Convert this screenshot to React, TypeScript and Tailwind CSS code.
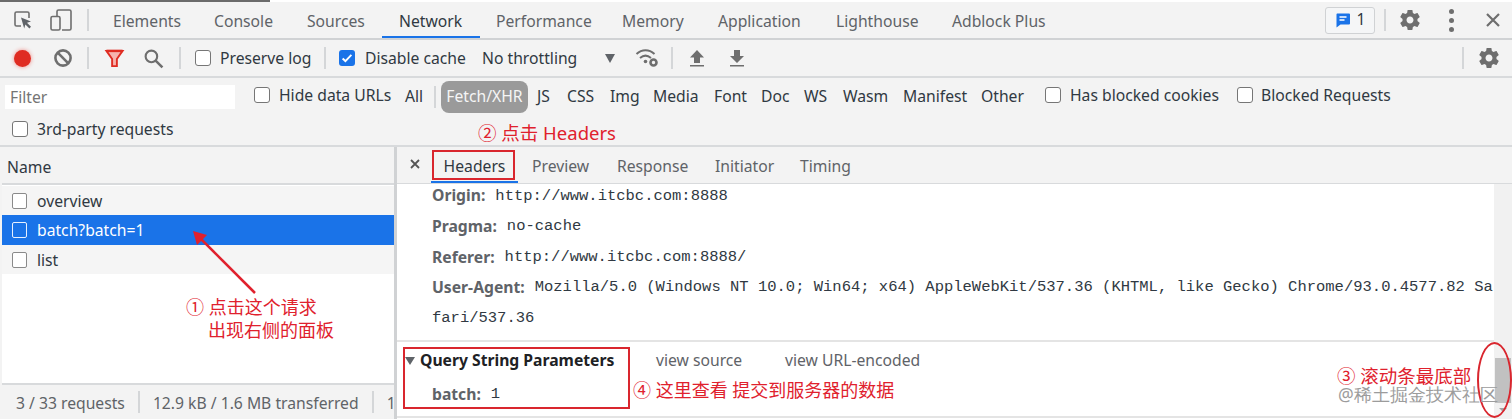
import React from 'react';

const gearPath =
  'M19.43 12.98c.04-.32.07-.64.07-.98s-.03-.66-.07-.98l2.11-1.65c.19-.15.24-.42.12-.64l-2-3.46c-.12-.22-.39-.3-.61-.22l-2.49 1c-.52-.4-1.08-.73-1.69-.98l-.38-2.65C14.46 2.18 14.25 2 14 2h-4c-.25 0-.46.18-.49.42l-.38 2.65c-.61.25-1.17.59-1.69.98l-2.49-1c-.23-.09-.49 0-.61.22l-2 3.46c-.13.22-.07.49.12.64l2.11 1.65c-.04.32-.07.65-.07.98s.03.66.07.98l-2.11 1.65c-.19.15-.24.42-.12.64l2 3.46c.12.22.39.3.61.22l2.49-1c.52.4 1.08.73 1.69.98l.38 2.65c.03.24.24.42.49.42h4c.25 0 .46-.18.49-.42l.38-2.65c.61-.25 1.17-.59 1.69-.98l2.49 1c.23.09.49 0 .61-.22l2-3.46c.12-.22.07-.49-.12-.64l-2.11-1.65zM12 15.5c-1.93 0-3.5-1.57-3.5-3.5s1.57-3.5 3.5-3.5 3.5 1.57 3.5 3.5-1.57 3.5-3.5 3.5z';

function Gear({ className }: { className: string }) {
  return (
    <svg viewBox="0 0 24 24" className={className} fill="#6e6e6e">
      <path d={gearPath} />
    </svg>
  );
}

function Sep({ className }: { className: string }) {
  return <div className={`w-[2px] h-[22px] bg-[#d4d6d8] shrink-0 ${className}`} />;
}

function Check({ className = '', on = false }: { className?: string; on?: boolean }) {
  if (on) {
    return (
      <span className={`w-[16px] h-[16px] rounded-[3px] bg-[#1a73e8] flex items-center justify-center shrink-0 ${className}`}>
        <svg viewBox="0 0 16 16" className="w-[14px] h-[14px]" fill="none" stroke="#fff" strokeWidth="2.2">
          <path d="M3 8.5l3.2 3L13 4.5" />
        </svg>
      </span>
    );
  }
  return <span className={`w-[16px] h-[16px] rounded-[3px] border-[1.5px] border-[#767676] bg-white shrink-0 ${className}`} />;
}

const tabs = [
  { label: 'Elements', cls: 'w-[68px] ml-[24px]' },
  { label: 'Console', cls: 'w-[63px] ml-[33px]' },
  { label: 'Sources', cls: 'w-[62px] ml-[30px]' },
  { label: 'Network', cls: 'w-[63px] ml-[30px]', active: true },
  { label: 'Performance', cls: 'w-[93px] ml-[34px]' },
  { label: 'Memory', cls: 'w-[62px] ml-[33px]' },
  { label: 'Application', cls: 'w-[84px] ml-[34px]' },
  { label: 'Lighthouse', cls: 'w-[82px] ml-[34px]' },
  { label: 'Adblock Plus', cls: 'w-[95px] ml-[34px]' },
];

const filters = [
  { label: 'JS', cls: 'w-[16px] ml-[9px]' },
  { label: 'CSS', cls: 'w-[28px] ml-[14px]' },
  { label: 'Img', cls: 'w-[28px] ml-[15px]' },
  { label: 'Media', cls: 'w-[46px] ml-[15px]' },
  { label: 'Font', cls: 'w-[32px] ml-[15px]' },
  { label: 'Doc', cls: 'w-[29px] ml-[15px]' },
  { label: 'WS', cls: 'w-[24px] ml-[14px]' },
  { label: 'Wasm', cls: 'w-[45px] ml-[15px]' },
  { label: 'Manifest', cls: 'w-[64px] ml-[15px]' },
  { label: 'Other', cls: 'w-[42px] ml-[14px]' },
];

const requests = [
  { name: 'overview', row: 'h-[29px] bg-[#f5f5f5] text-[#303942]', box: 'border-[#8a8a8a] bg-white' },
  { name: 'batch?batch=1', row: 'h-[30px] bg-[#1a73e8] text-white', box: 'border-[#e8f0fe] bg-[#1a73e8]' },
  { name: 'list', row: 'h-[29px] bg-[#f5f5f5] text-[#303942]', box: 'border-[#8a8a8a] bg-white' },
];

const headerRows = [
  { key: 'Origin:', value: 'http://www.itcbc.com:8888' },
  { key: 'Pragma:', value: 'no-cache' },
  { key: 'Referer:', value: 'http://www.itcbc.com:8888/' },
  {
    key: 'User-Agent:',
    value: 'Mozilla/5.0 (Windows NT 10.0; Win64; x64) AppleWebKit/537.36 (KHTML, like Gecko) Chrome/93.0.4577.82 Sa',
  },
];

const mono = "font-['Liberation_Mono',monospace] text-[15.5px] text-[#303942]";
const red = "text-[#e0212d] font-['Noto_Sans','Noto_Sans_CJK_SC',sans-serif]";

export default function App(): React.ReactNode {
  return (
    <div className="relative w-[1512px] h-[419px] overflow-hidden bg-[#f3f3f3] font-['Noto_Sans',sans-serif] text-[15.7px] text-[#303942] leading-none">
      <div className="flex h-[2px]">
        <div className="w-[270px] bg-[#6b6b6b]" />
        <div className="flex-1 bg-white" />
      </div>

      {/* main tab bar */}
      <div className="h-[38px] border-b-2 border-[#d0d2d4] flex items-center text-[#5f6368]">
        <svg viewBox="0 0 20 20" className="w-[20px] h-[20px] ml-[13px] shrink-0" fill="none">
          <path d="M8 16H3.5A1.5 1.5 0 0 1 2 14.5v-11A1.5 1.5 0 0 1 3.5 2h11A1.5 1.5 0 0 1 16 3.5V8" stroke="#6e6e6e" strokeWidth="1.6" />
          <path d="M8 7.5l10 4-4 1.3 4 4-1.6 1.6-4-4-1.2 4z" fill="#5f6368" />
        </svg>
        <svg viewBox="0 0 24 24" className="w-[24px] h-[24px] ml-[16px] shrink-0" fill="none" stroke="#6e6e6e" strokeWidth="1.6">
          <path d="M8 8V3.5A1.5 1.5 0 0 1 9.5 2h11A1.5 1.5 0 0 1 22 3.5v17a1.5 1.5 0 0 1-1.5 1.5H13" />
          <rect x="2" y="8.5" width="9" height="13.5" rx="1.5" />
        </svg>
        <Sep className="ml-[14px]" />
        {tabs.map(t => (
          <div
            key={t.label}
            className={`relative h-full flex items-center pt-[3px] whitespace-nowrap shrink-0 ${t.cls} ${t.active ? 'text-[#303942]' : ''}`}
          >
            {t.label}
            {t.active && <div className="absolute -left-[17px] -right-[18px] bottom-0 h-[2px] bg-[#1a73e8]" />}
          </div>
        ))}
        <div className="ml-auto w-[50px] h-[27px] rounded-[3px] border border-[#d0d2d4] bg-[#f5f6f7] flex items-center justify-center gap-[6px] text-[#303942]">
          <svg viewBox="0 0 16 16" className="w-[16px] h-[16px]">
            <path d="M2 1.5h12a1 1 0 0 1 1 1v9a1 1 0 0 1-1 1H5.5L1.5 15.5V2.5a1 1 0 0 1 .5-1z" fill="#1a73e8" />
            <path d="M4.5 5h7M4.5 8h5" stroke="#fff" strokeWidth="1.3" />
          </svg>
          1
        </div>
        <Sep className="ml-[9px]" />
        <Gear className="w-[24px] h-[24px] ml-[12px] shrink-0" />
        <div className="ml-[27px] flex flex-col gap-[4px] shrink-0">
          <span className="w-[5px] h-[5px] rounded-full bg-[#6e6e6e]" />
          <span className="w-[5px] h-[5px] rounded-full bg-[#6e6e6e]" />
          <span className="w-[5px] h-[5px] rounded-full bg-[#6e6e6e]" />
        </div>
        <svg viewBox="0 0 16 16" className="w-[16px] h-[16px] ml-[31px] mr-[11px] shrink-0" stroke="#6e6e6e" strokeWidth="2.2">
          <path d="M2 2l12 12M14 2L2 14" />
        </svg>
      </div>

      {/* network toolbar */}
      <div className="h-[38px] border-b-2 border-[#d8dadc] flex items-center whitespace-nowrap">
        <span className="w-[17px] h-[17px] rounded-full bg-[#df2c22] ml-[14px] shrink-0 shadow-[0_0_4px_#ef8a85]" />
        <svg viewBox="0 0 20 20" className="w-[20px] h-[20px] ml-[22px] shrink-0" fill="none" stroke="#6e6e6e" strokeWidth="2.6">
          <circle cx="10" cy="10" r="7.6" />
          <path d="M4.7 4.7l10.6 10.6" />
        </svg>
        <Sep className="ml-[14px]" />
        <svg viewBox="0 0 20 20" className="w-[21px] h-[19px] ml-[15px] shrink-0" fill="none" stroke="#df2c22" strokeWidth="2">
          <path d="M1.5 2h17l-6 8.5V18h-5v-7.5z" fill="#f6b3ae" />
          <path d="M1.5 2h17" strokeWidth="2.6" />
        </svg>
        <svg viewBox="0 0 20 20" className="w-[21px] h-[21px] ml-[18px] shrink-0" fill="none" stroke="#6e6e6e" strokeWidth="2">
          <circle cx="8" cy="8" r="5.5" />
          <path d="M12 12l6.5 6.5" strokeWidth="2.4" />
        </svg>
        <Sep className="ml-[15px]" />
        <Check className="ml-[14px]" />
        <span className="ml-[9px] w-[90px] pt-[2px]">Preserve log</span>
        <Sep className="ml-[14px]" />
        <Check on className="ml-[13px]" />
        <span className="ml-[10px] w-[101px] pt-[2px]">Disable cache</span>
        <span className="ml-[16px] w-[96px] pt-[2px]">No throttling</span>
        <span className="ml-[27px] w-0 h-0 border-x-[5px] border-x-transparent border-t-[9px] border-t-[#5f6368]" />
        <svg viewBox="0 0 24 20" className="w-[24px] h-[20px] ml-[20px] shrink-0" fill="none" stroke="#6e6e6e" strokeWidth="2">
          <path d="M1.5 6C7 1 14 1 19.5 6M5 10c3.5-3 7.5-3 11 0" />
          <circle cx="10.5" cy="13.5" r="1.8" fill="#6e6e6e" stroke="none" />
          <circle cx="18.5" cy="14.5" r="3" strokeWidth="2.6" />
        </svg>
        <Sep className="ml-[12px]" />
        <svg viewBox="0 0 16 18" className="w-[16px] h-[18px] ml-[16px] shrink-0" fill="#6e6e6e">
          <path d="M8 1l7 7.5h-4V14H5V8.500H1zM1 16h14v1.5H1z" />
        </svg>
        <svg viewBox="0 0 16 18" className="w-[16px] h-[18px] ml-[24px] shrink-0" fill="#6e6e6e">
          <path d="M5 1h6v6h4l-7 7-7-7h4zM1 16h14v1.5H1z" />
        </svg>
        <Sep className="ml-auto" />
        <Gear className="w-[24px] h-[24px] ml-[13px] mr-[11px] shrink-0" />
      </div>

      {/* filter bar */}
      <div className="h-[69px] border-b-2 border-[#d8dadc]">
        <div className="h-[37px] flex items-center whitespace-nowrap">
          <div className="ml-[5px] w-[230px] h-[24px] bg-white flex items-center pl-[5px] pt-[2px] text-[#757575] mt-[1px] shrink-0">Filter</div>
          <Check className="ml-[19px] -mt-[3px]" />
          <span className="ml-[9px] w-[113px] -mt-[1px] shrink-0">Hide data URLs</span>
          <span className="ml-[13px] w-[18px] mt-[1px] shrink-0">All</span>
          <Sep className="ml-[11px]" />
          <span className="ml-[5px] w-[87px] h-[32px] rounded-[8px] bg-[#9a9a9a] text-[#f5f5f5] flex items-center justify-center shrink-0">Fetch/XHR</span>
          {filters.map(f => (
            <span key={f.label} className={`${f.cls} mt-[1px] shrink-0`}>
              {f.label}
            </span>
          ))}
          <Check className="ml-[22px] -mt-[3px]" />
          <span className="ml-[9px] w-[152px] -mt-[1px] shrink-0">Has blocked cookies</span>
          <Check className="ml-[15px] -mt-[3px]" />
          <span className="ml-[8px] -mt-[1px] shrink-0">Blocked Requests</span>
        </div>
        <div className="h-[30px] flex items-center">
          <Check className="ml-[12px] -mt-[2px]" />
          <span className="ml-[9px]">3rd-party requests</span>
        </div>
      </div>

      {/* split view */}
      <div className="flex h-[272px]">
        <div className="w-[392px] ml-[2px] shrink-0 bg-white flex flex-col">
          <div className="h-[38px] border-b-2 border-[#d8dadc] bg-[#f3f3f3] flex items-center pl-[5px] pt-[5px]">Name</div>
          <div className="h-[1px]" />
          {requests.map(r => (
            <div key={r.name} className={`${r.row} flex items-center`}>
              <span className={`ml-[10px] w-[15px] h-[16px] rounded-[2px] border-[1.5px] ${r.box}`} />
              <span className="ml-[10px] pt-[2px]">{r.name}</span>
            </div>
          ))}
          <div className="flex-1" />
          <div className="h-[36px] border-t-2 border-[#d8dadc] bg-[#f3f3f3] flex items-center text-[#5f6368] overflow-hidden whitespace-nowrap">
            <span className="ml-[14px] w-[110px] pt-[3px]">3 / 33 requests</span>
            <Sep className="ml-[13px]" />
            <span className="ml-[13px] w-[206px] pt-[3px]">12.9 kB / 1.6 MB transferred</span>
            <Sep className="ml-[13px]" />
            <span className="ml-[13px] pt-[3px]">1</span>
          </div>
        </div>
        <div className="w-[3px] bg-[#d0d2d4] shrink-0" />
        <div className="flex-1 bg-white flex flex-col min-w-0">
          <div className="h-[37px] bg-[#f3f3f3] border-b border-[#d8dadc] flex items-center text-[#5f6368] shrink-0">
            <svg viewBox="0 0 10 10" className="w-[10px] h-[10px] ml-[13px] -mt-[3px] shrink-0" stroke="#555" strokeWidth="1.8">
              <path d="M1 1l8 8M9 1L1 9" />
            </svg>
            <div className="relative h-full ml-[11px] w-[87px] flex items-center justify-center pt-[4px] text-[#303942] shrink-0">
              Headers
              <div className="absolute inset-x-0 bottom-0 h-[2px] bg-[#1a73e8]" />
            </div>
            <span className="ml-[14px] w-[58px] pt-[4px]">Preview</span>
            <span className="ml-[27px] w-[71px] pt-[4px]">Response</span>
            <span className="ml-[27px] w-[58px] pt-[4px]">Initiator</span>
            <span className="ml-[27px] pt-[4px]">Timing</span>
          </div>
          <div className="flex flex-1 min-h-0">
            <div className="flex-1 min-w-0 flex flex-col">
              <div className="h-[158px] border-b-2 border-[#e4e4e4] overflow-hidden shrink-0">
                <div className="pl-[35px] -mt-[3px]">
                  {headerRows.map(h => (
                    <div key={h.key} className="h-[30.6px] flex items-center whitespace-nowrap">
                      <span className="font-bold text-[#5f6368]">{h.key}</span>
                      <span className={`ml-[10px] ${mono}`}>{h.value}</span>
                    </div>
                  ))}
                  <div className={`h-[30px] flex items-center ${mono}`}>fari/537.36</div>
                </div>
              </div>
              <div className="h-[76px] border-b-2 border-[#e4e4e4]">
                <div className="h-[38px] flex items-center whitespace-nowrap">
                  <span className="ml-[8px] w-0 h-0 border-x-[5px] border-x-transparent border-t-[8px] border-t-[#5f6368]" />
                  <span className="ml-[5px] font-bold text-[#202124] w-[236px]">Query String Parameters</span>
                  <span className="text-[#5f6368] w-[88px]">view source</span>
                  <span className="ml-[41px] text-[#5f6368]">view URL-encoded</span>
                </div>
                <div className="h-[30px] flex items-center pl-[35px]">
                  <span className="font-bold text-[#5f6368]">batch:</span>
                  <span className={`ml-[10px] ${mono}`}>1</span>
                </div>
              </div>
            </div>
            <div className="w-[18px] bg-[#f1f1f1] shrink-0 flex flex-col items-center">
              <div className="mt-[174px] w-[16px] h-[45px] bg-[#c1c1c1]" />
              <span className="mt-[5px] w-0 h-0 border-x-[4px] border-x-transparent border-t-[4px] border-t-[#a3a3a3]" />
            </div>
          </div>
        </div>
      </div>

      {/* annotations drawn over the screenshot */}
      <div className="absolute left-[432px] top-[150px] w-[83px] h-[30px] border-2 border-[#d9262e]" />
      <div className="absolute left-[403px] top-[347px] w-[227px] h-[62px] border-2 border-[#d9262e]" />
      <div className="absolute left-[1477px] top-[342px] w-[35px] h-[76px] rounded-[50%] border-2 border-[#d9262e]" />
      <svg className="absolute left-[185px] top-[225px] w-[80px] h-[76px]" viewBox="0 0 80 76" fill="none">
        <path d="M70 68L12 10" stroke="#e0212d" strokeWidth="2.5" />
        <path d="M8 6l14 4-10 10z" fill="#e0212d" />
      </svg>
      <div className={`absolute left-[478px] top-[124px] text-[18.5px] whitespace-nowrap ${red}`}>② 点击 Headers</div>
      <div className={`absolute left-[186px] top-[296px] text-[18px] leading-[23px] whitespace-nowrap ${red}`}>
        ① 点击这个请求
        <br />
        <span className="ml-[22px]">出现右侧的面板</span>
      </div>
      <div className={`absolute left-[633px] top-[381px] text-[18px] whitespace-nowrap ${red}`}>④ 这里查看 提交到服务器的数据</div>
      <div className={`absolute left-[1337px] top-[367px] text-[18.5px] whitespace-nowrap ${red}`}>③ 滚动条最底部</div>
      <div className="absolute left-[1338px] top-[386px] text-[17.5px] whitespace-nowrap text-[#9c9c9c]">@稀土掘金技术社区</div>
    </div>
  );
}
